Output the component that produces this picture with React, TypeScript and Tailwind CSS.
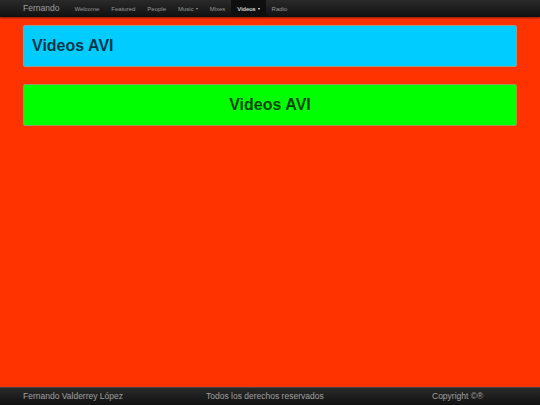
import React from 'react';

const links = [
  { label: 'Welcome' },
  { label: 'Featured' },
  { label: 'People' },
  { label: 'Music', caret: true },
  { label: 'Mixes' },
  { label: 'Videos', caret: true, active: true },
  { label: 'Radio' },
];

const Caret: React.FC<{ light?: boolean }> = ({ light }) => (
  <span
    className={`ml-[2px] inline-block h-0 w-0 border-x-[1.5px] border-t-[2px] border-x-transparent align-middle ${
      light ? 'border-t-white' : 'border-t-[#999]'
    }`}
  />
);

export default function App() {
  return (
    <div
      className="flex h-[405px] w-[540px] flex-col bg-[#ff3300]"
      style={{ fontFamily: '"Liberation Sans", Arial, sans-serif' }}
    >
      {/* Navbar */}
      <nav className="flex h-[17px] items-stretch bg-gradient-to-b from-[#2a2a2a] to-[#111] px-[23px] shadow-[0_1px_2px_rgba(0,0,0,0.5)]">
        <span className="mr-[9px] flex items-center text-[8.5px] leading-none text-[#a0a0a0]">
          Fernando
        </span>
        {links.map((link) => (
          <span
            key={link.label}
            className={`flex items-center px-[6px] text-[6px] leading-none ${
              link.active ? 'bg-[#0f0f0f] text-white' : 'text-[#999]'
            }`}
          >
            {link.label}
            {link.caret && <Caret light={link.active} />}
          </span>
        ))}
      </nav>

      {/* Content */}
      <main className="flex flex-1 flex-col gap-[17px] px-[23px] pt-[8px]">
        <div className="flex h-[42px] items-center rounded-[2px] border border-[#9a9a8a] bg-[#00ccff] px-[8px]">
          <h1 className="text-[16px] font-bold text-black/75">Videos AVI</h1>
        </div>
        <div className="flex h-[42px] items-center justify-center rounded-[2px] border border-[#9a9a5a] bg-[#00ff00] px-[8px]">
          <h1 className="text-[16px] font-bold text-black/75">Videos AVI</h1>
        </div>
      </main>

      {/* Footer */}
      <footer className="grid h-[18px] grid-cols-[183px_226px_1fr] items-center border-t border-[#444] bg-gradient-to-b from-[#2a2a2a] to-[#111] px-[23px] text-[8.5px] leading-none text-[#a0a0a0]">
        <span>Fernando Valderrey López</span>
        <span>Todos los derechos reservados</span>
        <span>Copyright ©®</span>
      </footer>
    </div>
  );
}
